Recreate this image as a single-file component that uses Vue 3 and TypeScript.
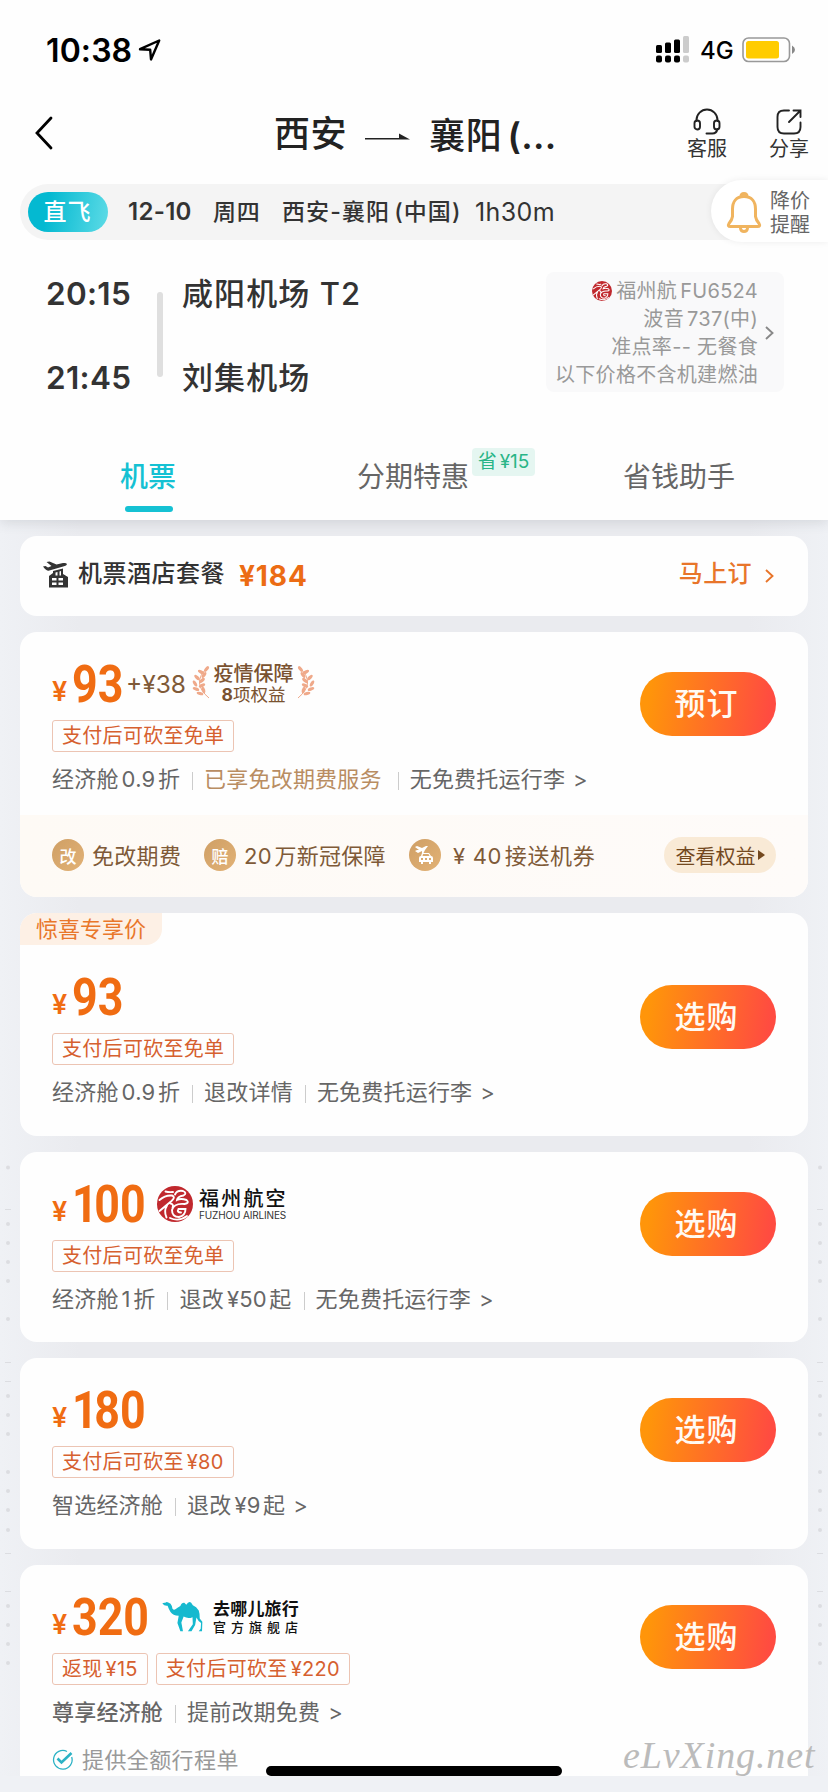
<script setup lang="ts">
import { h, type FunctionalComponent } from 'vue'

interface Detail { text: string; tone?: 'gold' | 'strong' }
interface Fare {
  price: string
  action: string
  tags: string[]
  details: Detail[]
  ribbon?: string
  logo?: 'fuzhou' | 'qunar'
  benefits?: boolean
  note?: string
}

const fares: Fare[] = [
  {
    price: '93', action: '预订', tags: ['支付后可砍至免单'], benefits: true,
    details: [{ text: '经济舱0.9折' }, { text: '已享免改期费服务', tone: 'gold' }, { text: '无免费托运行李' }],
  },
  {
    price: '93', action: '选购', tags: ['支付后可砍至免单'], ribbon: '惊喜专享价',
    details: [{ text: '经济舱0.9折' }, { text: '退改详情' }, { text: '无免费托运行李' }],
  },
  {
    price: '100', action: '选购', tags: ['支付后可砍至免单'], logo: 'fuzhou',
    details: [{ text: '经济舱1折' }, { text: '退改¥50起' }, { text: '无免费托运行李' }],
  },
  {
    price: '180', action: '选购', tags: ['支付后可砍至¥80'],
    details: [{ text: '智选经济舱' }, { text: '退改¥9起' }],
  },
  {
    price: '320', action: '选购', tags: ['返现¥15', '支付后可砍至¥220'], logo: 'qunar', note: '提供全额行程单',
    details: [{ text: '尊享经济舱', tone: 'strong' }, { text: '提前改期免费' }],
  },
]

// Adds thin spacing between Chinese characters and figures.
const Mixed: FunctionalComponent<{ text: string }> = (props) =>
  h('span', { class: 'mixed' }, (props.text.match(/[\x20-\u00ff]+|[^\x20-\u00ff]+/g) ?? []).map((part) =>
    h('span', { class: /^[\x20-\u00ff]/.test(part) ? 'mixed-num' : 'mixed-cjk' }, part)))

const emblem = 'M2.500 14Q8 9 15 9.500 19 11 14.500 15L2.500 25M10 19.500Q6.500 25 9.500 31.500M13.500 17.500Q17 18 15.500 22M8.500 5.500Q12 6.500 16 6M18 8.500Q20 4 26 5 30.500 7 26.500 9.500 20.500 10.500 20 14 24 12 29.500 14 33 17 27.500 18 17 17 15 24 15 31 22 31 28.500 29.500 28.500 23H21.500Q19.500 26.500 24 26.500M13 32Q22 36 30 30'

const leaves = [
  { x: 14.5, y: 4, a: -50 }, { x: 9, y: 7, a: 30 }, { x: 12, y: 10, a: -55 },
  { x: 5, y: 12.5, a: 45 }, { x: 10, y: 15.5, a: -40 }, { x: 3, y: 18.5, a: 60 },
  { x: 10, y: 20.5, a: -25 }, { x: 4, y: 24, a: 20 }, { x: 11.5, y: 25, a: 75 }, { x: 8, y: 28.5, a: 15 },
]

const dots = [1167.5, 1224, 1243, 1262, 1281, 1319, 1396, 1415, 1434, 1472, 1491, 1510, 1530, 1606, 1625, 1644, 1663]
const dashes = [1209, 1362, 1381, 1553, 1591]
</script>

<template>
  <div class="screen">
    <header class="top">
      <div class="status">
        <span class="clock">10:38</span>
        <svg class="locate" viewBox="0 0 24 24"><path d="M2 11.2 21.2 2.5 13 21.5 12.2 11.8Z" /></svg>
        <svg class="signal" viewBox="0 0 34 28">
          <rect x="0" y="9" width="6" height="8" rx="1.5" /><rect x="9" y="6.500" width="6" height="10.500" rx="1.500" />
          <rect x="18" y="3.500" width="6" height="13.500" rx="1.500" /><rect class="dim" x="27" y="0" width="6" height="17" rx="1.500" />
          <rect x="0" y="19.500" width="6" height="7" rx="2" /><rect x="9" y="19.500" width="6" height="7" rx="2" />
          <rect x="18" y="19.500" width="6" height="7" rx="2" /><rect class="dim" x="27" y="19.500" width="6" height="7" rx="2" />
        </svg>
        <span class="net">4G</span>
        <svg class="battery" viewBox="0 0 54 26">
          <rect x="1" y="1" width="46.500" height="23.500" rx="5.500" fill="none" stroke="#999" stroke-width="1.600" />
          <rect x="4" y="4" width="33" height="17.500" rx="2.500" fill="#fc0" />
          <path d="M50 8.500q3 1.800 3 4.300t-3 4.300z" fill="#888" />
        </svg>
      </div>

      <nav class="nav">
        <svg class="back" viewBox="0 0 18 34"><path d="M16 2 2 17 16 32" /></svg>
        <h1 class="route">
          <span>西安</span>
          <svg class="route-arrow" viewBox="0 0 46 10"><path d="M0 6.500H45L34 0.500V5H0z" /></svg>
          <span class="dest">襄阳<b>(...</b></span>
        </h1>
        <div class="nav-item service">
          <svg viewBox="0 0 28 28">
            <path d="M3.500 13V12a10.500 10.500 0 0 1 21 0v1M24.300 21q-.6 4.500-5 4.500H13.500" />
            <rect x="1.500" y="12.500" width="5.500" height="9" rx="2.750" /><rect x="21" y="12.500" width="5.500" height="9" rx="2.750" />
          </svg>
          <span>客服</span>
        </div>
        <div class="nav-item">
          <svg viewBox="0 0 28 28"><path d="M14 2.500H9Q2.500 2.500 2.500 9V19Q2.500 25.500 9 25.500H19Q25.500 25.500 25.500 19V14.500M18.500 2.500H25.500V9M25 3 14 14" /></svg>
          <span>分享</span>
        </div>
      </nav>

      <div class="trip">
        <span class="direct">直飞</span>
        <span class="trip-date">12-10</span>
        <span class="trip-week">周四</span>
        <span class="trip-route">西安-襄阳<i>(</i>中国)</span>
        <span class="trip-time">1h30m</span>
        <div class="alert">
          <svg viewBox="0 0 36 42">
            <path d="M18 4.500C10 4.500 6.500 10 6.500 17V24.500Q6 28 3 31.500Q1.200 34.500 4.500 34.500H31.500Q34.800 34.500 33 31.500Q30 28 29.500 24.500V17C29.500 10 26 4.500 18 4.500Z" />
            <path d="M15 4.500Q15 1.500 18 1.500T21 4.500M14.500 36.500q.5 3 3.500 3t3.500-3" />
          </svg>
          <span>降价<br>提醒</span>
        </div>
      </div>

      <section class="flight">
        <div class="times"><span>20:15</span><span>21:45</span></div>
        <i class="rail"></i>
        <div class="airports"><span>咸阳机场 T2</span><span>刘集机场</span></div>
        <div class="plane">
          <div class="plane-text">
            <div class="plane-line">
              <svg class="emblem" viewBox="0 0 36 36">
                <circle cx="18" cy="18" r="18" />
                <path :d="emblem" />
              </svg>
              <Mixed text="福州航FU6524" />
            </div>
            <div class="plane-line"><Mixed text="波音737(" />中)</div>
            <div class="plane-line">准点率-- 无餐食</div>
            <div class="plane-line">以下价格不含机建燃油</div>
          </div>
          <svg class="chev" viewBox="0 0 9 14"><path d="M1 1 7.500 7 1 13" /></svg>
        </div>
      </section>

      <div class="tabs">
        <span class="tab active">机票</span>
        <span class="tab">分期特惠<em><Mixed text="省¥15" /></em></span>
        <span class="tab last">省钱助手</span>
      </div>
    </header>

    <main class="list">
      <svg class="edge" viewBox="0 0 828 1792">
        <template v-for="x in [8, 820]" :key="x">
          <circle v-for="y in dots" :key="y" :cx="x" :cy="y" r="2" />
          <rect v-for="y in dashes" :key="-y" :x="x - 3" :y="y" width="6" height="1" />
        </template>
      </svg>

      <div class="card bundle">
        <svg class="bundle-icon" viewBox="0 0 26 27">
          <path d="M0 5.500 2.500 5 5 6.500 8.500 5 3.500 1 6.500.5 13.500 3.500 20 2Q23.500 1.500 24 3.200 23.500 4.500 21 5.200L5.500 9.800Q3.500 10 0 5.500Z" />
          <path fill-rule="evenodd" d="M6 15 10 12V10L20 7.500V13L25 16V26.500H6ZM12.500 11.500V14.500H14.500V11ZM16.500 10.500V14.500H18V10ZM9 17V19.500H13.500V17ZM15.500 17V19.500H20V17ZM9 21.500V24H13.500V21.500ZM15.500 21.500V24H20V21.500Z" />
        </svg>
        <span class="bundle-name">机票酒店套餐</span>
        <span class="bundle-price">¥184</span>
        <span class="bundle-go">马上订</span>
        <svg class="chev orange" viewBox="0 0 9 14"><path d="M1 1 7.500 7 1 13" /></svg>
      </div>

      <article v-for="(fare, i) in fares" :key="i" class="card fare" :class="['fare-' + i]">
        <div v-if="fare.ribbon" class="ribbon">{{ fare.ribbon }}</div>
        <div class="body">
          <div class="info">
            <div class="price-row">
              <span class="yen">¥</span>
              <span class="amount" :class="['digits-' + fare.price.length, { 'lead-one': fare.price.startsWith('1') }]"><span>{{ fare.price }}</span></span>
              <template v-if="fare.benefits">
                <span class="plus">+¥38</span>
                <svg class="laurel" viewBox="0 0 19 34">
                  <path d="M15 3Q-1 18 17 33" /><ellipse v-for="(l, n) in leaves" :key="n" rx="3.400" ry="1.600" :transform="`translate(${l.x} ${l.y}) rotate(${l.a})`" />
                </svg>
                <span class="cover"><strong>疫情保障</strong><small><b>8</b>项权益</small></span>
                <svg class="laurel flip" viewBox="0 0 19 34">
                  <path d="M15 3Q-1 18 17 33" /><ellipse v-for="(l, n) in leaves" :key="n" rx="3.400" ry="1.600" :transform="`translate(${l.x} ${l.y}) rotate(${l.a})`" />
                </svg>
              </template>
              <div v-if="fare.logo === 'fuzhou'" class="brand fuzhou">
                <svg class="emblem" viewBox="0 0 36 36">
                  <circle cx="18" cy="18" r="18" />
                  <path :d="emblem" />
                </svg>
                <span class="brand-text"><strong>福州航空</strong><small>FUZHOU AIRLINES</small></span>
              </div>
              <div v-if="fare.logo === 'qunar'" class="brand qunar">
                <svg class="camel" viewBox="35 65 125 94">
                  <path d="M36 72Q40 69 45 70 49 66 54 69L61 73Q66 79 67 88 71 94 77 89 83 84 91 80 95 69 103 70L109 76Q117 63 124 70L129 78Q140 82 147 94 151 106 150 118L158 128 157 157H147L153 149 154 132Q145 126 140 115L136 138 125 157H114L129 136 128 114Q114 120 101 112L94 130 99 157H91L82 132 86 110Q68 108 61 98 55 88 52 79 43 81 36 72Z" />
                </svg>
                <span class="brand-text"><strong>去哪儿旅行</strong><small>官方旗舰店</small></span>
              </div>
            </div>
            <div class="tags"><span v-for="tag in fare.tags" :key="tag" class="tag"><Mixed :text="tag" /></span></div>
            <div class="details">
              <span v-for="d in fare.details" :key="d.text" class="detail" :class="d.tone"><Mixed :text="d.text" /></span>
              <span class="more">&gt;</span>
            </div>
            <div v-if="fare.note" class="note">
              <svg viewBox="0 0 22 22"><path d="M19.700 8A9.300 9.300 0 1 1 15 2.500" /><path class="tick" d="M5.500 9.500 9.500 13.500 19.500 4" /></svg>
              <span>{{ fare.note }}</span>
            </div>
          </div>
          <button class="buy">{{ fare.action }}</button>
        </div>
        <div v-if="fare.benefits" class="perks">
          <i class="coin">改</i><span class="perk p1">免改期费</span>
          <i class="coin">赔</i><span class="perk p2"><Mixed text="20万新冠保障" /></span>
          <i class="coin">
            <svg viewBox="0 0 22 20"><path d="M1 2 3 1 8 3 12 1 14 1 11 5 9 9 8 9 8 6 4 8 1 6 3 5 5 5Z" /><path fill-rule="evenodd" d="M8 8H15L17 11Q19 11 19 13V17H17V19H15V17H9V19H7V17H5V13Q5 11 7 11ZM9 9 8.500 11H15.500L14.500 9ZM7 13V15H9V13ZM11 13V15H13V13ZM15 13V15H17V13Z" /></svg>
          </i><span class="perk p3"><Mixed text="¥ 40接送机券" /></span>
          <span class="view">查看权益<i></i></span>
        </div>
      </article>
    </main>

    <div class="home"></div>
    <div class="mark"><span>eLvXing.net</span></div>
  </div>
</template>

<style>
body { margin: 0; background: #eff1f5; }
.mixed { white-space: pre; }
.mixed-cjk + .mixed-num { margin-left: 3px; }
.mixed-num + .mixed-cjk { margin-left: 2.500px; }
</style>

<style scoped>
.screen { position: relative; width: 828px; height: 1792px; overflow: hidden; background: #eff1f5; color: #333; font-family: Inter, "Noto Sans CJK SC", sans-serif; font-size: 22px; white-space: nowrap; }
svg { display: block; flex: none; overflow: visible; }
i, em { font-style: normal; }
.top { position: relative; z-index: 1; height: 520px; background: #fefefe; box-shadow: 0 2px 12px rgba(70, 75, 90, .16); }

.status { box-sizing: border-box; height: 96px; padding: 4px 32px 0 46px; display: flex; align-items: center; color: #000; }
.clock { font-size: 32px; font-weight: 600; width: 92px; letter-spacing: .1px; }
.locate { width: 24px; height: 24px; fill: none; stroke: #000; stroke-width: 2.4; stroke-linejoin: round; }
.signal { width: 34px; height: 28px; margin-left: auto; }
.signal .dim { fill: #ccc; }
.net { margin-left: 10px; font-size: 24px; font-weight: 500; width: 42px; }
.battery { width: 54px; height: 26px; }

.nav { height: 88px; display: flex; align-items: center; padding: 0 19px 0 35px; }
.back { width: 18px; height: 34px; margin-top: -14px; fill: none; stroke: #000; stroke-width: 2.8; stroke-linecap: round; }
.route { margin: -13px 0 0 221px; display: flex; align-items: center; font-size: 36px; font-weight: 500; color: #222; letter-spacing: .6px; line-height: 54px; }
.route-arrow { width: 46px; height: 10px; margin: 8px 18px 0 18px; fill: #222; }
.dest { margin-top: 5px; }
.dest b { margin-left: 5px; font-weight: 600; letter-spacing: .3px; }
.nav-item { display: flex; flex-direction: column; align-items: center; font-size: 20px; line-height: 26px; color: #333; margin-top: -11px; }
.nav-item svg { width: 28px; height: 28px; fill: none; stroke: #222; stroke-width: 1.9; stroke-linecap: round; }
.service { margin-left: auto; margin-right: 42px; }

.trip { position: relative; margin-left: 20px; height: 56px; padding-left: 8px; background: #f4f4f4; border-radius: 28px 0 0 28px; display: flex; align-items: center; font-size: 23px; font-weight: 500; line-height: 30px; }
.direct { width: 80px; height: 40px; border-radius: 20px; background: linear-gradient(100deg, #04b9d1 25%, #5ddbe6); color: #fff; display: flex; align-items: center; justify-content: center; letter-spacing: 1px; text-indent: -1px; }
.trip-date { margin-left: 20px; width: 85px; font-size: 24px; font-weight: 600; letter-spacing: .3px; }
.trip-week { width: 69px; letter-spacing: .8px; }
.trip-route { width: 193px; letter-spacing: 1.1px; }
.trip-route i { margin-left: 4px; }
.trip-time { font-weight: 400; font-size: 25px; letter-spacing: .4px; }
.alert { position: absolute; right: 0; top: -4px; width: 117px; height: 62px; border-radius: 31px 0 0 31px; background: #fff; box-shadow: 0 0 7px rgba(0, 0, 0, .07); display: flex; align-items: center; color: #666; font-weight: 400; font-size: 20px; line-height: 24px; }
.alert svg { width: 36px; height: 42px; margin: 4px 8px 0 15px; fill: none; stroke: #f0b45f; stroke-width: 3; stroke-linecap: round; }
.alert span { padding-top: 3px; }

.flight { height: 190px; padding-left: 46px; display: flex; align-items: flex-start; font-size: 31px; font-weight: 500; }
.times, .airports { display: flex; flex-direction: column; line-height: 84px; padding-top: 12px; }
.times { width: 111px; font-weight: 600; font-size: 31.500px; letter-spacing: .3px; }
.rail { width: 6px; height: 85px; border-radius: 3px; margin-top: 52px; background: #dfdfdf; }
.airports { margin-left: 19px; letter-spacing: 1.1px; }
.plane { box-sizing: border-box; margin: 32px 44px 0 auto; width: 238px; height: 120px; border-radius: 8px; background: #f9f9fa; display: flex; align-items: center; justify-content: flex-end; padding: 2px 10px 0 0; font-size: 20px; line-height: 28px; font-weight: 400; color: #999; letter-spacing: .3px; }
.plane-text { display: flex; flex-direction: column; align-items: flex-end; }
.plane-line { display: flex; align-items: center; white-space: pre; }
.plane .emblem { width: 20px; height: 20px; margin-right: 4px; }
.emblem circle { fill: #c0282d; }
.emblem path { fill: none; stroke: #fff; stroke-width: 1.900; stroke-linecap: round; }
.chev { width: 9px; height: 14px; margin-left: 7px; fill: none; stroke: #888; stroke-width: 1.900; }

.tabs { height: 90px; display: flex; color: #666; font-size: 28px; line-height: 94px; position: relative; }
.tab { width: 112px; margin-left: 181px; position: relative; }
.tab.active { width: 56px; margin-left: 120px; color: #15c1d3; font-weight: 500; }
.tab.active::after { content: ''; position: absolute; left: 5px; bottom: 8px; width: 48px; height: 6px; border-radius: 3px; background: #15c1d3; }
.tab.last { margin-left: 154px; }
.tab em { position: absolute; left: 115px; top: 18px; width: 63px; height: 28px; border-radius: 4px; background: #e5f6f1; color: #29b587; font-size: 19px; line-height: 28px; text-align: center; }

.list { height: 1240px; overflow: hidden; padding: 16px 20px 0; box-sizing: content-box; background: linear-gradient(90deg, #eff1f5, #eaebef 80px, #eaebef 748px, #eff1f5); }
.edge { position: absolute; left: 0; top: 0; width: 828px; height: 1792px; fill: #dcdde1; }
.card { position: relative; background: #fefefe; border-radius: 17px; overflow: hidden; margin-bottom: 16px; }
.bundle { height: 80px; display: flex; align-items: center; box-sizing: border-box; padding: 0 34px 0 23px; font-size: 24px; font-weight: 500; line-height: 32px; }
.bundle-icon { width: 26px; height: 27px; fill: #333; margin-top: -4px; }
.bundle-name { margin: -4px 0 0 9px; letter-spacing: .5px; }
.bundle-price { margin: 0 0 0 14px; font-weight: 700; font-size: 28px; color: #ec6c14; letter-spacing: .9px; }
.bundle-go { margin: -4px 0 0 auto; color: #e8752a; letter-spacing: .4px; }
.chev.orange { stroke: #e8752a; margin-left: 13px; }

.body { display: flex; justify-content: space-between; padding: 28px 32px 0; }
.fare-0 { height: 265px; }
.fare-1 { height: 223px; }
.fare-2 { height: 190px; }
.fare-3 { height: 191px; }
.fare-4 { height: 240px; }
.ribbon { width: 142px; height: 32px; border-radius: 0 0 16px 0; background: #fdf0e5; color: #e9772b; font-size: 22px; line-height: 32px; text-indent: 16px; }
.price-row { height: 50px; display: flex; align-items: center; line-height: 50px; color: #f06c12; }
.yen { font-size: 27px; font-weight: 600; width: 20px; margin-top: 14px; }
.amount { font-family: Roboto, Inter, sans-serif; font-size: 52px; font-weight: 700; }
.amount span { display: inline-block; transform: scaleX(.86); transform-origin: 0 50%; }
.lead-one span::first-letter { letter-spacing: -4px; }
.digits-2 { width: 51px; }
.digits-3 { width: 77px; }
.plus { font-size: 24.500px; font-weight: 400; color: #7f5a38; margin: -3px 0 0 3px; width: 66px; }
.laurel { width: 19px; height: 34px; margin-top: -6px; fill: #efa98a; }
.laurel path { fill: none; stroke: #efa98a; }
.flip { transform: scaleX(-1); }
.cover { display: flex; flex-direction: column; width: 85px; align-items: center; color: #7a5230; margin-top: -1px; }
.cover strong { font-size: 20px; line-height: 21px; font-weight: 500; }
.cover small { font-size: 17.500px; line-height: 20px; }
.brand { display: flex; align-items: center; color: #111; margin-top: -3px; }
.brand-text { display: flex; flex-direction: column; }
.fuzhou { margin-left: 8px; }
.fuzhou .emblem { width: 36px; height: 36px; margin-right: 6px; }
.fuzhou strong { font-size: 20px; line-height: 22px; letter-spacing: 2.200px; font-weight: 500; }
.fuzhou small { font-size: 10px; line-height: 10px; letter-spacing: -.15px; color: #333; }
.qunar { margin-left: 13px; }
.camel { width: 41px; height: 31px; fill: #16b9cf; margin-right: 10px; }
.qunar strong { font-size: 17px; line-height: 19px; font-weight: 600; letter-spacing: .2px; margin-top: 2px; }
.qunar small { font-size: 13px; line-height: 17px; letter-spacing: 5px; font-weight: 500; }

.tags { display: flex; gap: 8px; margin-top: 10px; }
.tag { box-sizing: border-box; height: 32px; padding: 0 9px; border: 1px solid #ecc4b3; border-radius: 3px; font-size: 20px; line-height: 30px; letter-spacing: .3px; color: #d6602f; }
.details { display: flex; align-items: center; height: 32px; margin-top: 11px; color: #666; letter-spacing: .2px; line-height: 32px; }
.detail { display: flex; align-items: center; }
.detail + .detail::before { content: ''; width: 1px; height: 18px; margin: 3px 11px 0 12px; background: #ccc; }
.gold { color: #b98d62; }
.gold + .detail::before { margin-left: 16px; }
.strong { font-weight: 500; }
.more { margin-left: 8px; }
.note { height: 32px; margin-top: 14px; display: flex; align-items: center; gap: 8px; color: #999; letter-spacing: .4px; }
.note svg { width: 22px; height: 22px; margin-top: 3px; fill: none; stroke: #2bb2c5; stroke-width: 1.300; }
.note .tick { stroke-width: 2.600; }
.buy { flex: none; width: 136px; height: 64px; margin: 12px 0 0; padding: 0; border: 0; border-radius: 32px; background: linear-gradient(98deg, #ff950a 8%, #ff4b41 94%); color: #fffaf3; font: 500 31px/62px Inter, "Noto Sans CJK SC", sans-serif; letter-spacing: 1px; text-indent: -3px; }

.perks { margin-top: 20px; height: 82px; background: linear-gradient(180deg, #fefaf6, #fdf7f1); background: linear-gradient(90deg, #fefaf5, #fefbf9); display: flex; align-items: center; padding: 0 32px; color: #7f5a38; font-size: 22px; box-sizing: border-box; padding-bottom: 2px; }
.coin { width: 32px; height: 32px; border-radius: 50%; background: linear-gradient(135deg, #cf9f65, #e2b276); color: #fff; font-size: 17px; font-weight: 500; display: flex; align-items: center; justify-content: center; }
.coin svg { width: 22px; height: 20px; fill: #fff; }
.perk { margin-left: 8px; margin-top: -3px; letter-spacing: .3px; }
.p1 { width: 112px; }
.p2 { width: 165px; }
.p3 { margin-left: 12px; letter-spacing: .7px; }
.view { margin-left: auto; width: 112px; height: 36px; border-radius: 18px; background: #f9ead6; display: flex; align-items: center; justify-content: center; font-size: 20px; color: #74491f; }
.view i { margin-left: 2px; border-left: 7px solid #74491f; border-top: 5px solid transparent; border-bottom: 5px solid transparent; }

.home { position: absolute; z-index: 2; left: 266px; top: 1766px; width: 296px; height: 10px; border-radius: 5px; background: #000; }
.mark { position: absolute; z-index: 2; left: 623px; top: 1731px; width: 196px; color: #bbb; font: italic 38px/48px "Liberation Serif", serif; letter-spacing: .9px; }
</style>
